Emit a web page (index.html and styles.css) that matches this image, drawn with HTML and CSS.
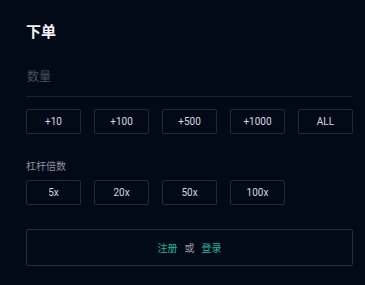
FILE: index.html
```html
<!DOCTYPE html>
<html lang="zh-CN">
<head>
<meta charset="utf-8">
<title>下单</title>
<link rel="stylesheet" href="styles.css">
</head>
<body>
<div class="panel">
  <div class="title">下单</div>
  <div class="input">数量</div>
  <div class="grid">
    <div class="btn">+10</div>
    <div class="btn">+100</div>
    <div class="btn">+500</div>
    <div class="btn">+1000</div>
    <div class="btn">ALL</div>
  </div>
  <div class="label">杠杆倍数</div>
  <div class="grid">
    <div class="btn">5x</div>
    <div class="btn">20x</div>
    <div class="btn">50x</div>
    <div class="btn">100x</div>
  </div>
  <div class="cta">
    <span class="link">注册</span>
    <span class="or">或</span>
    <span class="link">登录</span>
  </div>
</div>
</body>
</html>
```
FILE: styles.css
```css
html, body {
  margin: 0;
  padding: 0;
  background: #030a17;
}
body {
  font-family: Roboto, "Noto Sans CJK SC", sans-serif;
  color: #d0d4dc;
}
.panel {
  padding: 22px 12px 0 26px;
  display: flex;
  flex-direction: column;
}
.title {
  height: 20px;
  line-height: 20px;
  font-size: 15px;
  font-weight: 600;
  color: #f2f4f7;
}
.input {
  margin-top: 20px;
  padding: 7px 0 11px 1px;
  line-height: 16px;
  font-size: 12px;
  color: #4a505e;
  border-bottom: 1px solid #1b2130;
}
.grid {
  display: grid;
  grid-template-columns: repeat(5, 1fr);
  column-gap: 13px;
  margin-top: 12px;
}
.btn {
  height: 25px;
  box-sizing: border-box;
  border: 1px solid #232b3a;
  border-radius: 2px;
  display: flex;
  align-items: center;
  justify-content: center;
  font-size: 10px;
  color: #d4d8e0;
}
.label {
  margin-top: 26px;
  line-height: 14px;
  font-size: 10px;
  color: #8c919c;
}
.label + .grid {
  margin-top: 6px;
}
.cta {
  margin-top: 24px;
  height: 37px;
  box-sizing: border-box;
  border: 1px solid #262e3d;
  border-radius: 2px;
  display: flex;
  align-items: center;
  justify-content: center;
  gap: 7px;
  font-size: 10px;
}
.link {
  color: #1fb59a;
}
.or {
  color: #9d93a3;
}
```
